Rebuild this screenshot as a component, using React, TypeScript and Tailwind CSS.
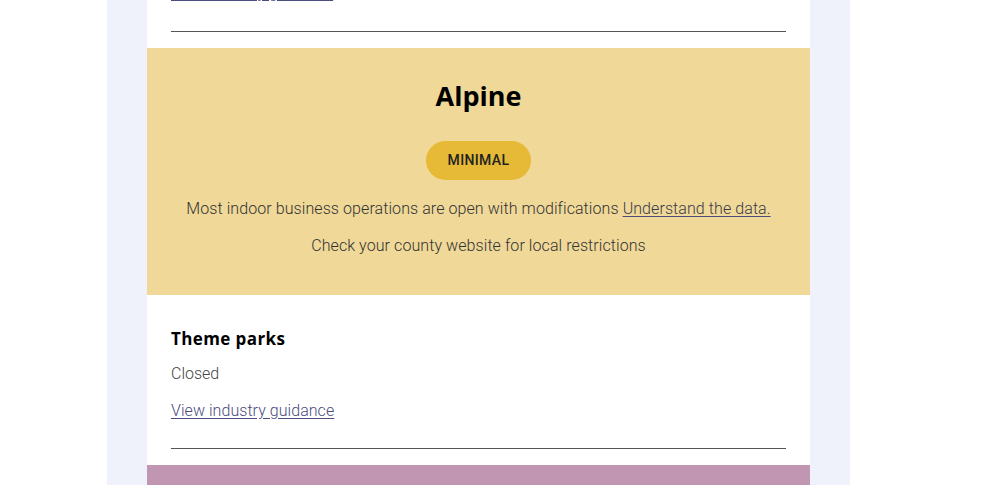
export default function App() {
  const body = { fontFamily: "Roboto, 'Liberation Sans', sans-serif" };
  const head = { fontFamily: "'Open Sans', Lato, 'Liberation Sans', sans-serif" };

  return (
    <div className="w-full h-[485px] overflow-hidden bg-white">
      <div className="ml-[107px] w-[743px] px-[40px] bg-[#eff2fb] min-h-[485px]">
        <div className="bg-white min-h-[485px]" style={body}>
          {/* tail of previous item */}
          <div className="px-[24px] -mt-[19px]">
            <a className="block leading-[24px] text-[16px] font-light text-[#4b4b7d] underline underline-offset-2">
              View industry guidance
            </a>
            <div className="mt-[26px] mb-[16px] border-t border-[#555]" />
          </div>

          {/* county header */}
          <div className="bg-[#f0d898] pt-[30px] pb-[37px] flex flex-col items-center text-center">
            <h2 className="text-[27px] leading-[36px] font-bold text-black" style={head}>
              Alpine
            </h2>
            <span className="mt-[27px] h-[39px] px-[22px] rounded-full bg-[#e6b936] flex items-center text-[14px] font-medium tracking-wide text-[#222]">
              MINIMAL
            </span>
            <p className="mt-[17px] text-[16px] leading-[24px] font-light tracking-[0.08px] text-[#333]">
              Most indoor business operations are open with modifications{" "}
              <a className="text-[#3a3a4a] underline decoration-[#4b4b7d] underline-offset-2">Understand the data.</a>
            </p>
            <p className="mt-[13px] text-[16px] leading-[24px] font-light tracking-[0.08px] text-[#333]">
              Check your county website for local restrictions
            </p>
          </div>

          {/* item */}
          <div className="px-[24px] pt-[32px]">
            <h3 className="text-[17px] leading-[24px] font-bold tracking-[0.4px] text-black" style={head}>
              Theme parks
            </h3>
            <p className="mt-[11px] text-[16px] leading-[24px] font-light text-[#444]">Closed</p>
            <a className="block mt-[13px] text-[16px] leading-[24px] font-light tracking-[0.05px] text-[#4b4b7d] underline underline-offset-2">
              View industry guidance
            </a>
            <div className="mt-[25px] mb-[16px] border-t border-[#555]" />
          </div>

          <div className="bg-[#c096b2] h-[40px]" />
        </div>
      </div>
    </div>
  );
}
